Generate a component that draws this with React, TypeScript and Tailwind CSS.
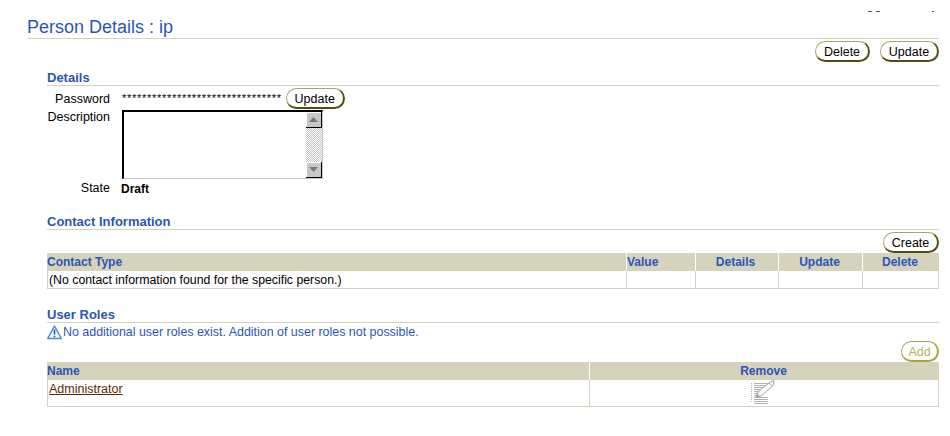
import type { ReactNode } from 'react'
import clsx from 'clsx'

function OvalButton({ label, disabled, className }: { label: string; disabled?: boolean; className?: string }) {
  return (
    <button
      className={clsx(
        'h-[21px] rounded-full border border-[#a6a66a] border-r-2 border-b-2 border-r-[#4f4f10] border-b-[#4f4f10] bg-white pt-px text-[12.5px] leading-[18px]',
        disabled ? 'text-[#b5b35c] border-r-[#a6a63c] border-b-[#a6a63c]' : 'text-black',
        className,
      )}
    >
      {label}
    </button>
  )
}

function SectionHeading({ title }: { title: string }) {
  return (
    <h2 className="h-[17px] border-b border-[#d6d3bd] pt-[2px] text-[13px] font-bold leading-[14px] text-[#2b55b8]">{title}</h2>
  )
}

function Th({ children, className }: { children: ReactNode; className?: string }) {
  return <div className={clsx('h-[18px] text-[12px] font-bold leading-[18px] text-[#2b55b8]', className)}>{children}</div>
}

function ScrollArrow({ up }: { up?: boolean }) {
  return (
    <div className="flex h-[16px] w-[16px] items-center justify-center border-r border-b border-black bg-[#c8c8c8] shadow-[inset_1px_1px_0_#ffffff]">
      <svg width="9" height="5" viewBox="0 0 9 5">
        <path d={up ? 'M4.5 0 L9 5 L0 5 Z' : 'M0 0 L9 0 L4.5 5 Z'} fill="#7a7a7a" />
      </svg>
    </div>
  )
}

function EditIcon() {
  return (
    <svg width="24" height="24" viewBox="0 0 24 24" fill="none">
      <path d="M0.5 3V23" stroke="#b4b4b4" strokeDasharray="1 1" />
      <path
        d="M3 3.5H17M3 5.5H15M3 7.5H13M3 9.5H11M3 11.5H9M3 13.5H7M3 15.5H6M3 17.5H17M3 19.5H17M3 21.5H17M3 23.5H17"
        stroke="#b4b4b4"
      />
      <path d="M5 17 L7 12 L19 2 L23 0.5 L22.5 5 L10 16 Z" fill="#fff" stroke="#a0a0a0" />
      <path d="M5 17 L7 14 L8 16 Z" fill="#8c8c8c" />
      <path d="M18 3 L21.5 6" stroke="#a0a0a0" />
    </svg>
  )
}

function WarningIcon() {
  return (
    <svg width="16" height="15" viewBox="0 0 16 15" className="shrink-0">
      <path d="M7.5 1 L14.3 13.5 H0.7 Z" fill="#f2f7ff" stroke="#4d8ae8" strokeWidth="1.5" strokeLinejoin="round" />
      <path d="M7.5 4.5 V9.5 M7.5 10.8 V12.2" stroke="#2b55b8" strokeWidth="1.6" />
    </svg>
  )
}

export default function App() {
  return (
    <div className="h-[436px] w-[950px] overflow-hidden bg-white font-['Liberation_Sans',Arial,sans-serif] text-[12.5px] text-black">
      <div className="flex h-[12px] justify-end pt-[11px] pr-[16px]">
        <span className="mr-[1px] h-px w-[4px] bg-[#2b55b8]" />
        <span className="mr-[52px] ml-[3px] h-px w-[4px] bg-[#2b55b8]" />
        <span className="h-px w-[2px] bg-[#2b55b8]" />
      </div>
      <div className="ml-[27px] w-[912px]">
        <h1 className="h-[27px] border-b border-[#d6d3bd] pt-[5px] text-[18px] leading-[21px] text-[#2b55b8]">Person Details : ip</h1>
        <div className="mt-[2px] flex justify-end gap-[10px]">
          <OvalButton label="Delete" className="w-[55px]" />
          <OvalButton label="Update" className="w-[59px]" />
        </div>

        <div className="mt-[7px] ml-[20px]">
          <SectionHeading title="Details" />
          <div className="mt-[2px] flex h-[21px] items-center">
            <div className="w-[63px] pt-px text-right">Password</div>
            <div className="ml-[12px] text-[11px] tracking-[0.71px]">********************************</div>
            <OvalButton label="Update" className="ml-[4px] w-[59px]" />
          </div>
          <div className="mt-px flex">
            <div className="w-[63px] pt-px text-right leading-[12px]">Description</div>
            <div className="ml-[12px] flex h-[69px] w-[201px] border-t-2 border-l-2 border-t-black border-l-black border-r border-b border-r-[#c8c8c8] border-b-[#c8c8c8]">
              <div className="flex-1 bg-white" />
              <div className="flex w-[16px] flex-col justify-between bg-[#e4e4e4] bg-[repeating-conic-gradient(#c4c4c4_0_25%,#ffffff_0_50%)] bg-[length:2px_2px]">
                <ScrollArrow up />
                <ScrollArrow />
              </div>
            </div>
          </div>
          <div className="mt-px flex h-[17px] items-center">
            <div className="w-[63px] text-right">State</div>
            <div className="ml-[11px] text-[12px] font-bold">Draft</div>
          </div>

          <div className="mt-[16px]">
            <SectionHeading title="Contact Information" />
          </div>
          <div className="mt-[2px] flex justify-end">
            <OvalButton label="Create" className="w-[56px]" />
          </div>
          <div className="grid grid-cols-[580px_69px_83px_84px_76px] bg-[#d6d3bd]">
            <Th className="border-r border-white">Contact Type</Th>
            <Th className="border-r border-white">Value</Th>
            <Th className="border-r border-white pr-[3px] text-center">Details</Th>
            <Th className="border-r border-white pr-[2px] text-center">Update</Th>
            <Th className="pr-[2px] text-center">Delete</Th>
          </div>
          <div className="grid h-[18px] grid-cols-[579px_69px_83px_84px_75px] border-x border-b border-[#d6d3bd] bg-white text-[12.3px] leading-[18px]">
            <div className="border-r border-[#d6d3bd] pl-px">(No contact information found for the specific person.)</div>
            <div className="border-r border-[#d6d3bd]" />
            <div className="border-r border-[#d6d3bd]" />
            <div className="border-r border-[#d6d3bd]" />
            <div />
          </div>

          <div className="mt-[17px]">
            <SectionHeading title="User Roles" />
          </div>
          <div className="mt-[2px] flex h-[15px] items-center text-[12.43px] text-[#2b55b8]">
            <WarningIcon />
            <span>No additional user roles exist. Addition of user roles not possible.</span>
          </div>
          <div className="mt-px flex justify-end">
            <OvalButton label="Add" disabled className="w-[38px]" />
          </div>
          <div className="grid grid-cols-[543px_349px] bg-[#d6d3bd]">
            <Th className="border-r border-white">Name</Th>
            <Th className="pr-[2px] text-center">Remove</Th>
          </div>
          <div className="grid h-[27px] grid-cols-[542px_348px] border-x border-b border-[#d6d3bd] bg-white">
            <div className="border-r border-[#d6d3bd] pl-px leading-[18px]">
              <a href="#" className="text-[#5a2a00] underline">Administrator</a>
            </div>
            <div className="flex justify-center pr-[2px]">
              <EditIcon />
            </div>
          </div>
        </div>
      </div>
    </div>
  )
}
